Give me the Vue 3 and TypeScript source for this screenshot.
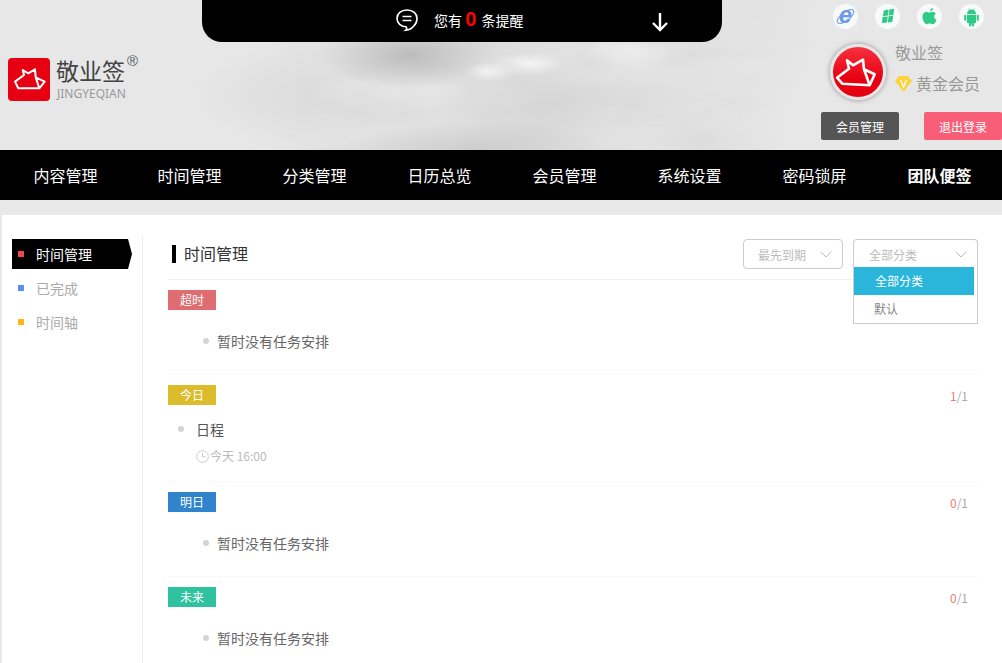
<script setup lang="ts">
interface Section {
  label: string
  color: string
  done: number
  total: number
  tasks: { title: string; time: string }[]
}

const navItems = ['内容管理', '时间管理', '分类管理', '日历总览', '会员管理', '系统设置', '密码锁屏', '团队便签']

const sideItems = [
  { label: '时间管理', color: '#f04848', active: true },
  { label: '已完成', color: '#5e8afa', active: false },
  { label: '时间轴', color: '#ffb716', active: false }
]

const sections: Section[] = [
  { label: '超时', color: '#df6c70', done: 0, total: 0, tasks: [] },
  { label: '今日', color: '#dcbb2d', done: 1, total: 1, tasks: [{ title: '日程', time: '今天 16:00' }] },
  { label: '明日', color: '#3083cd', done: 0, total: 1, tasks: [] },
  { label: '未来', color: '#2fc29e', done: 0, total: 1, tasks: [] }
]
</script>

<template>
  <div class="page">
    <header class="header">
      <svg class="clouds" width="1002" height="150" aria-hidden="true">
        <defs>
          <filter id="cloud" x="0" y="0" width="100%" height="100%">
            <feTurbulence type="fractalNoise" baseFrequency="0.012 0.035" numOctaves="5" seed="4" />
            <feColorMatrix type="matrix" values="0 0 0 0 0.6  0 0 0 0 0.6  0 0 0 0 0.6  0.6 0 0 0 -0.24" />
          </filter>
          <linearGradient id="fade" x1="0" x2="1" y1="0" y2="0">
            <stop offset="0.28" stop-color="#000" />
            <stop offset="0.38" stop-color="#fff" />
            <stop offset="0.7" stop-color="#fff" />
            <stop offset="0.82" stop-color="#000" />
          </linearGradient>
          <mask id="fadeMask">
            <rect width="1002" height="150" fill="url(#fade)" />
          </mask>
        </defs>
        <rect width="1002" height="150" filter="url(#cloud)" mask="url(#fadeMask)" />
      </svg>

      <div class="logo">
        <span class="logo__mark">
          <svg width="42" height="43" viewBox="0 0 42 43">
            <path d="M7 23.600 10.300 30.300H31.300L36.700 23.700 27.700 19.300 27 11.300 20.300 15.300 14.700 12 16 17ZM27.700 19.300 31.300 30.300" fill="none" stroke="#fff" stroke-width="2" stroke-linejoin="round" />
          </svg>
        </span>
        <span class="logo__text">
          <span class="logo__name">敬业签<sup class="logo__reg">®</sup></span>
          <span class="logo__pinyin">JINGYEQIAN</span>
        </span>
      </div>

      <div class="notice">
        <svg class="notice__icon" width="24" height="24" viewBox="0 0 24 24" fill="none" stroke="#fff" stroke-width="1.6">
          <path d="M12 2C6 2 2 5.600 2 10.400s4 8.400 9.200 8.400c.8 1.400.6 2.600-.4 3.400 3.400-.2 6.400-2 8-4.200 1.800-1.700 3.200-4 3.200-7.600C22 5.600 18 2 12 2Z" />
          <path d="M7.500 8.500h9M7.500 12.500h9" />
        </svg>
        <span class="notice__text">您有 <b class="notice__count">0</b> 条提醒</span>
        <svg class="notice__arrow" width="18" height="20" viewBox="0 0 18 20" fill="none" stroke="#fff" stroke-width="2.400">
          <path d="M9 1V18M2 11l7 7 7-7" />
        </svg>
      </div>

      <div class="account">
        <div class="platforms">
          <span class="platform platform--tinted">
            <svg class="platform__ie" width="25" height="25" viewBox="0 0 25 25">
              <ellipse cx="12.500" cy="12.500" rx="10" ry="4.200" transform="rotate(-38 12.500 12.500)" fill="none" stroke="#7ba3e6" stroke-width="1.200" />
              <text x="12.500" y="19" text-anchor="middle" class="platform__e">e</text>
            </svg>
          </span>
          <span class="platform platform--tinted">
            <svg width="25" height="25" viewBox="0 0 25 25" fill="#2ecb87">
              <path d="M8.800 6.500 13.600 5.600 12.900 11.600 7.900 12.200Z" />
              <path d="M14.400 5.400 19.200 4.800 18.400 10.800 13.700 11.500Z" />
              <path d="M7.700 13 12.700 12.400 12 18.400 6.800 19Z" />
              <path d="M13.600 12.300 18.200 11.600 17.400 17.800 12.800 18.400Z" />
            </svg>
          </span>
          <span class="platform">
            <svg width="25" height="25" viewBox="0 0 25 25" fill="#2ecb87">
              <path d="M13 7.300c.2-1.700 1.300-3 3-3.300.2 1.800-1.100 3.300-3 3.300Z" />
              <path d="M9.500 7.900c1.300 0 2.100.7 3 .7s1.900-.8 3.300-.7c1.200 0 2.400.6 3.100 1.700-2.600 1.700-2.100 5.200.6 6.300-.7 2-2.300 4.300-3.800 4.300-1.100 0-1.600-.7-3-.7s-2 .7-3 .7C7.800 20.200 5.500 16.500 5.500 12.800c0-3 1.500-4.900 4-4.900Z" />
            </svg>
          </span>
          <span class="platform">
            <svg width="25" height="25" viewBox="0 0 25 25" fill="#2ecb87">
              <path d="M8 10a4.500 4.500 0 0 1 9 0Z" />
              <path d="M8 10.800h9v7.400a1 1 0 0 1-1 1h-1v2.300a1.100 1.100 0 0 1-2.200 0v-2.300h-.6v2.300a1.100 1.100 0 0 1-2.200 0v-2.300H9a1 1 0 0 1-1-1Z" />
              <rect x="5.200" y="10.800" width="2.100" height="6" rx="1" />
              <rect x="17.700" y="10.800" width="2.100" height="6" rx="1" />
              <path d="M9.500 4.500 10.800 6.500M15.500 4.500 14.200 6.500" stroke="#2ecb87" stroke-width=".7" />
            </svg>
          </span>
        </div>

        <div class="profile">
          <span class="avatar">
            <svg width="50" height="50" viewBox="0 0 50 50">
              <path d="M4 30.700 9.300 36.700 36.700 38.300 41.700 27.300 31 22.300 30 12.700 20 18.300 14 13.300 16 21.700ZM31 22.300 36.700 38.300" fill="none" stroke="#fff" stroke-width="2.600" stroke-linejoin="round" />
            </svg>
          </span>
          <div class="profile__info">
            <span class="profile__name">敬业签</span>
            <span class="profile__level">
              <svg width="17" height="17" viewBox="0 0 17 17">
                <path d="M4 1h9l4 5-8.500 11L0 6Z" fill="#fbd440" />
                <path d="M5.500 5 8.500 12 11.500 5" fill="none" stroke="#fff" stroke-width="1.300" />
              </svg>
              黄金会员
            </span>
          </div>
        </div>

        <div class="account__actions">
          <button class="action action--dark">会员管理</button>
          <button class="action action--pink">退出登录</button>
        </div>
      </div>
    </header>

    <nav class="nav">
      <a v-for="(item, i) in navItems" :key="item" class="nav__item" :class="{ 'nav__item--bold': i === navItems.length - 1 }">{{ item }}</a>
    </nav>

    <main class="main">
      <aside class="side">
        <div v-for="item in sideItems" :key="item.label" class="side__item" :class="{ 'side__item--active': item.active }">
          <i class="side__mark" :style="{ background: item.color }"></i>
          {{ item.label }}
        </div>
      </aside>

      <section class="content">
        <div class="toolbar">
          <h2 class="toolbar__title">时间管理</h2>
          <div class="select select--sort">
            <span>最先到期</span>
            <svg class="select__chevron" width="12" height="7" viewBox="0 0 12 7"><path d="M.5.5 6 6 11.500.5" fill="none" stroke="#bbb" /></svg>
          </div>
          <div class="select-wrap">
            <div class="select select--open">
              <span>全部分类</span>
              <svg class="select__chevron" width="12" height="7" viewBox="0 0 12 7"><path d="M.5.5 6 6 11.500.5" fill="none" stroke="#bbb" /></svg>
            </div>
            <ul class="menu">
              <li class="menu__item menu__item--active">全部分类</li>
              <li class="menu__item">默认</li>
            </ul>
          </div>
        </div>

        <div v-for="sec in sections" :key="sec.label" class="group" :class="{ 'group--tasks': sec.tasks.length }">
          <div class="group__head">
            <span class="tag" :style="{ background: sec.color }">{{ sec.label }}</span>
            <span v-if="sec.total" class="count"><em>{{ sec.done }}</em>/{{ sec.total }}</span>
          </div>
          <template v-if="sec.tasks.length">
            <div v-for="task in sec.tasks" :key="task.title" class="task">
              <div class="task__title"><i class="dot"></i>{{ task.title }}</div>
              <div class="task__time">
                <svg width="13" height="13" viewBox="0 0 13 13" fill="none" stroke="#ccc">
                  <circle cx="6.500" cy="6.500" r="5.800" />
                  <path d="M6.500 3v3.700h3" />
                </svg>
                {{ task.time }}
              </div>
            </div>
          </template>
          <div v-else class="empty"><i class="dot"></i>暂时没有任务安排</div>
        </div>
      </section>
    </main>
  </div>
</template>

<style>
html,
body {
  margin: 0;
  background: #fff;
  overflow: hidden;
}
</style>

<style scoped>
.page {
  width: 1002px;
  height: 663px;
  overflow: hidden;
  font-family: "Noto Sans CJK SC", "Liberation Sans", sans-serif;
  background: #e9e9e9;
}

/* Header */
.header {
  position: relative;
  display: flex;
  height: 150px;
  padding-left: 8px;
  box-sizing: border-box;
  background:
    radial-gradient(ellipse 26px 10px at 490px 72px, #f4f4f4, transparent),
    radial-gradient(ellipse 34px 12px at 530px 64px, #f4f4f4, transparent),
    radial-gradient(ellipse 45px 22px at 630px 52px, #efefef, transparent),
    radial-gradient(ellipse 90px 34px at 410px 55px, #bcbcbc, transparent),
    radial-gradient(ellipse 80px 22px at 390px 92px, #ececec, transparent),
    radial-gradient(ellipse 130px 28px at 480px 150px, #cdcdcd, transparent),
    radial-gradient(ellipse 120px 50px at 310px 95px, #dcdcdc, transparent),
    radial-gradient(ellipse 110px 45px at 540px 105px, #d8d8d8, transparent),
    linear-gradient(90deg, #e7e7e7 0, #e7e7e7 230px, #e0e0e0 420px, #e2e2e2 700px, #e7e7e7 800px);
}

.clouds {
  position: absolute;
  left: 0;
  top: 0;
}

.logo {
  position: relative;
  display: flex;
  gap: 6px;
  width: 194px;
  padding-top: 58px;
  box-sizing: border-box;
}

.logo__mark {
  display: block;
  width: 42px;
  height: 43px;
  border-radius: 4px;
  background: #e60012;
}

.logo__text {
  display: flex;
  flex-direction: column;
}

.logo__name {
  position: relative;
  height: 28px;
  font-size: 23px;
  line-height: 24px;
  color: #444;
}

.logo__reg {
  position: absolute;
  left: 71px;
  top: -4px;
  font-size: 15px;
  line-height: 14px;
  color: #555;
  font-family: "Liberation Sans", sans-serif;
}

.logo__pinyin {
  margin-top: 1px;
  padding-left: 1px;
  font-family: "Noto Sans", sans-serif;
  font-size: 12px;
  line-height: 14px;
  color: #9a9a9a;
}

.notice {
  position: relative;
  display: flex;
  align-items: center;
  width: 520px;
  height: 42px;
  padding-left: 193px;
  box-sizing: border-box;
  border-radius: 0 0 20px 20px;
  background: #000;
  color: #fff;
}

.notice__icon {
  margin-top: -2px;
}

.notice__text {
  margin-left: 15px;
  margin-top: -3px;
  font-size: 14px;
  white-space: nowrap;
}

.notice__count {
  margin-right: 2px;
  color: #f00;
  font-size: 20px;
  font-family: "Liberation Sans", sans-serif;
  line-height: 13px;
}

.notice__arrow {
  margin-left: 128px;
  margin-top: 2px;
}

.account {
  position: relative;
  display: flex;
  flex-direction: column;
  flex: 1;
  min-width: 0;
}

.platforms {
  display: flex;
  gap: 17px;
  padding: 4px 0 0 111px;
}

.platform {
  display: block;
  width: 25px;
  height: 25px;
  border-radius: 50%;
  background: #f8f9f9;
}

.platform--tinted {
  border-radius: 0;
  background: radial-gradient(circle 12.500px, #f8f9f9 97%, #e4ecf0 100%);
}

.platform__ie {
  overflow: visible;
}

.platform__e {
  font: italic bold 23px "Liberation Sans", sans-serif;
  fill: #6a9be8;
}

.profile {
  display: flex;
  margin-top: 15px;
  padding-left: 108px;
}

.avatar {
  display: block;
  flex: none;
  width: 50px;
  height: 50px;
  border-radius: 50%;
  background: linear-gradient(#f8303f, #e60012 65%);
  border: 3px solid #e6e6e6;
  box-shadow: 0 0 4px 1px #aaa;
}

.profile__info {
  display: flex;
  flex-direction: column;
  margin-left: 9px;
  color: #999;
  font-size: 16px;
}

.profile__name {
  margin-top: -4px;
  line-height: 24px;
}

.profile__level {
  display: flex;
  align-items: center;
  gap: 4px;
  margin-top: 7px;
  line-height: 24px;
  white-space: nowrap;
}

.account__actions {
  display: flex;
  justify-content: space-between;
  margin-top: 12px;
  padding-left: 99px;
}

.action {
  width: 78px;
  height: 28px;
  padding: 0;
  border: none;
  border-radius: 2px;
  color: #fff;
  font: 12px "Noto Sans CJK SC", sans-serif;
}

.action--dark {
  background: #555;
}

.action--pink {
  background: #f95e78;
}

/* Nav */
.nav {
  display: flex;
  height: 50px;
  padding-left: 2px;
  background: #000;
}

.nav__item {
  flex: none;
  width: 125px;
  color: #fff;
  font-size: 16px;
  line-height: 50px;
  text-align: center;
}

.nav__item:first-child {
  text-indent: 2px;
}

.nav__item--bold {
  font-weight: 700;
}

/* Main */
.main {
  display: flex;
  height: 448px;
  margin: 15px 0 0 2px;
  background: #fff;
}

.side {
  flex: none;
  width: 141px;
  height: 100%;
  margin-top: 20px;
  padding: 4px 0 0 10px;
  box-sizing: border-box;
  border-right: 1px solid #eee;
}

.side__item {
  display: flex;
  align-items: center;
  width: 120px;
  height: 30px;
  margin-bottom: 4px;
  padding-left: 6px;
  box-sizing: border-box;
  color: #aaa;
  font-size: 14px;
}

.side__item--active {
  background: #000;
  color: #fff;
  clip-path: polygon(0 0, 116px 0, 100% 50%, 116px 100%, 0 100%);
}

.side__mark {
  flex: none;
  width: 6px;
  height: 6px;
  margin-right: 12px;
}

.content {
  width: 810px;
  margin-left: 25px;
}

.toolbar {
  display: flex;
  align-items: flex-start;
  height: 65px;
  padding-top: 24px;
  box-sizing: border-box;
  border-bottom: 1px solid #f0f0f0;
}

.toolbar__title {
  flex: 1;
  height: 18px;
  margin: 6px 0 0 4px;
  padding-left: 8px;
  border-left: 4px solid #000;
  color: #333;
  font-size: 16px;
  font-weight: 400;
  line-height: 16px;
}

.select {
  display: flex;
  align-items: center;
  justify-content: space-between;
  height: 30px;
  box-sizing: border-box;
  border: 1px solid #ccc;
  border-radius: 4px;
  padding: 0 10px 0 15px;
  color: #bbb;
  font-size: 12px;
  background: #fff;
}

.select--sort {
  width: 100px;
  margin-right: 10px;
  padding-left: 14px;
}

.select-wrap {
  position: relative;
  width: 125px;
  height: 30px;
}

.select--open {
  border-bottom: none;
  border-radius: 4px 4px 0 0;
}

.menu {
  position: absolute;
  left: 0;
  top: 28px;
  width: 125px;
  margin: 0;
  padding: 0;
  box-sizing: border-box;
  list-style: none;
  border: 1px solid #ccc;
  border-top: none;
  background: #fff;
}

.menu__item {
  width: 120px;
  height: 28px;
  padding-left: 20px;
  box-sizing: border-box;
  color: #888;
  font-size: 12px;
  line-height: 28px;
}

.menu__item--active {
  padding-left: 21px;
  background: #29b6da;
  color: #fff;
}

.group {
  height: 95px;
  padding-top: 10px;
  box-sizing: border-box;
  border-bottom: 1px solid #f8f8f8;
}

.group--tasks {
  height: 107px;
}

.group__head {
  display: flex;
  align-items: center;
  justify-content: space-between;
  height: 20px;
  padding-right: 10px;
}

.tag {
  width: 48px;
  height: 20px;
  color: #fff;
  font-size: 12px;
  line-height: 20px;
  text-align: center;
}

.count {
  color: #aaa;
  font-size: 12px;
}

.count em {
  color: #f27a7e;
  font-style: normal;
}

.dot {
  display: inline-block;
  flex: none;
  width: 6px;
  height: 6px;
  border-radius: 50%;
  background: #d4d4d4;
}

.empty {
  display: flex;
  align-items: center;
  gap: 8px;
  margin-top: 21px;
  padding-left: 35px;
  color: #666;
  font-size: 14px;
  line-height: 20px;
}

.task {
  padding-left: 10px;
  margin-top: 14px;
}

.task__title {
  display: flex;
  align-items: center;
  gap: 12px;
  color: #555;
  font-size: 14px;
  line-height: 20px;
}

.task__time {
  display: flex;
  align-items: center;
  gap: 1px;
  margin-top: 8px;
  padding-left: 18px;
  color: #bbb;
  font-size: 12px;
  line-height: 18px;
}
</style>
